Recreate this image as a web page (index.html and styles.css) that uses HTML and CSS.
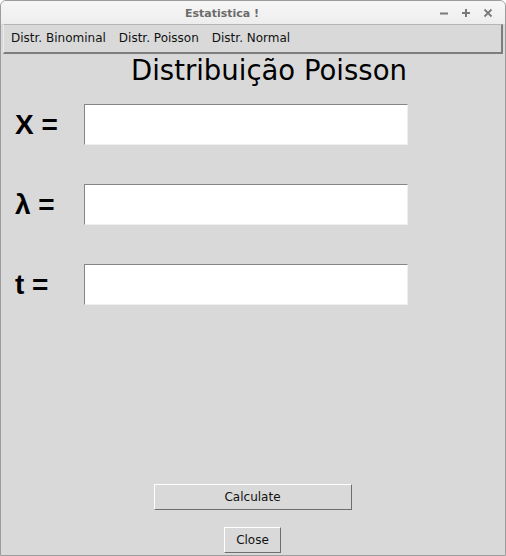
FILE: index.html
```html
<!DOCTYPE html>
<html>
<head>
<meta charset="utf-8">
<link rel="stylesheet" href="styles.css">
</head>
<body>
<div class="window">
  <div class="titlebar">
    <div class="title">Estatistica !</div>
    <div class="controls">
      <svg class="ctl" width="10" height="10" viewBox="0 0 10 10"><path d="M1 5.5H9" stroke="#7a7a7a" stroke-width="2"/></svg>
      <svg class="ctl" width="10" height="10" viewBox="0 0 10 10"><path d="M1 5H9M5 1V9" stroke="#7a7a7a" stroke-width="2"/></svg>
      <svg class="ctl" width="10" height="10" viewBox="0 0 10 10"><path d="M1.5 1.5L8.5 8.5M8.5 1.5L1.5 8.5" stroke="#7a7a7a" stroke-width="1.8"/></svg>
    </div>
  </div>
  <div class="menubar">
    <span class="menu-item">Distr. Binominal</span>
    <span class="menu-item">Distr. Poisson</span>
    <span class="menu-item">Distr. Normal</span>
  </div>
  <div class="content">
    <div class="heading">Distribuição Poisson</div>
    <div class="form">
      <div class="row"><div class="label">X =</div><div class="entry"></div></div>
      <div class="row"><div class="label">λ =</div><div class="entry"></div></div>
      <div class="row"><div class="label">t =</div><div class="entry"></div></div>
    </div>
    <div class="buttons">
      <div class="btn calc">Calculate</div>
      <div class="btn close">Close</div>
    </div>
  </div>
</div>
</body>
</html>
```
FILE: styles.css
```css
html, body {
  margin: 0;
  padding: 0;
  background: #ffffff;
}
.window {
  box-sizing: border-box;
  width: 506px;
  height: 556px;
  border: 1px solid #9c9c9c;
  border-radius: 6px 6px 0 0;
  background: #d9d9d9;
  overflow: hidden;
  display: flex;
  flex-direction: column;
}
.titlebar {
  height: 23px;
  background: linear-gradient(#f7f7f7, #ededed);
  display: flex;
  align-items: center;
  position: relative;
}
.title {
  width: 442px;
  text-align: center;
  font-family: "DejaVu Sans", sans-serif;
  font-weight: bold;
  font-size: 11px;
  color: #6b6b6b;
  padding-top: 1px;
}
.controls {
  display: flex;
  gap: 12px;
  margin-left: -4px;
  padding-top: 1px;
}
.ctl {
  display: block;
}
.menubar {
  box-sizing: border-box;
  height: 30px;
  margin: 0 2px;
  border-top: 1px solid #b5b5b5;
  border-left: 1px solid #ececec;
  border-right: 2px solid #7d7d7d;
  border-bottom: 2px solid #7d7d7d;
  display: flex;
  align-items: center;
  padding-left: 7px;
  padding-bottom: 1px;
  gap: 13px;
  font-family: "DejaVu Sans", sans-serif;
  font-size: 12px;
  color: #111;
}
.content {
  flex: 1;
  display: flex;
  flex-direction: column;
}
.heading {
  font-family: "DejaVu Sans", sans-serif;
  font-size: 27.5px;
  line-height: 30px;
  color: #000;
  padding-left: 130px;
  margin-top: 1px;
}
.form {
  display: flex;
  flex-direction: column;
  gap: 39px;
  margin-top: 19px;
  padding-left: 14px;
}
.row {
  display: flex;
  align-items: center;
}
.label {
  width: 69px;
  font-family: "Liberation Sans", Arial, sans-serif;
  font-weight: bold;
  font-size: 28px;
  color: #000;
}
.entry {
  box-sizing: border-box;
  width: 324px;
  height: 41px;
  background: #fff;
  border-top: 1px solid #858585;
  border-left: 1px solid #858585;
  border-bottom: 1px solid #eeeeee;
  border-right: 1px solid #eeeeee;
}
.buttons {
  margin-top: auto;
  display: flex;
  flex-direction: column;
  align-items: center;
  gap: 17px;
  padding-bottom: 2px;
  padding-right: 1px;
}
.btn {
  box-sizing: border-box;
  height: 26px;
  border-top: 1px solid #ffffff;
  border-left: 1px solid #ffffff;
  border-right: 1px solid #6e6e6e;
  border-bottom: 1px solid #6e6e6e;
  display: flex;
  align-items: center;
  justify-content: center;
  font-family: "DejaVu Sans", sans-serif;
  font-size: 12px;
  color: #111;
}
.calc {
  width: 198px;
}
.close {
  width: 57px;
}
```
